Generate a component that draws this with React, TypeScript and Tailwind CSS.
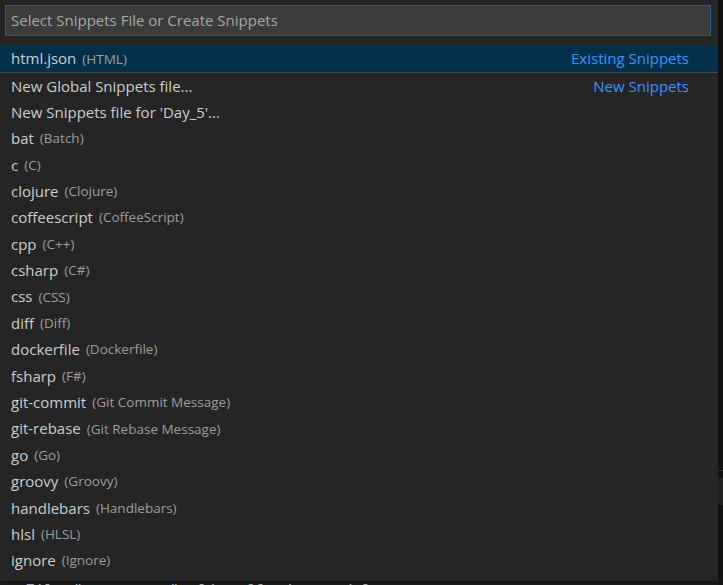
import React from "react";

const rows: [string, string][] = [
  ["bat", "Batch"],
  ["c", "C"],
  ["clojure", "Clojure"],
  ["coffeescript", "CoffeeScript"],
  ["cpp", "C++"],
  ["csharp", "C#"],
  ["css", "CSS"],
  ["diff", "Diff"],
  ["dockerfile", "Dockerfile"],
  ["fsharp", "F#"],
  ["git-commit", "Git Commit Message"],
  ["git-rebase", "Git Rebase Message"],
  ["go", "Go"],
  ["groovy", "Groovy"],
  ["handlebars", "Handlebars"],
  ["hlsl", "HLSL"],
  ["ignore", "Ignore"],
];

function Row({ label, desc, right, selected, border }: { label: string; desc?: string; right?: string; selected?: boolean; border?: boolean }) {
  return (
    <div
      className={
        "flex items-center pl-[11px] pr-[29px] " +
        (selected ? "bg-[#062f4a] h-[27.4px] " : "h-[26.4px] ") +
        (border ? "border-t border-[#3f4a57] " : "")
      }
    >
      <span className="text-[15px] text-[#cccccc] whitespace-pre">{label}</span>
      {desc && <span className="ml-[6px] text-[13.5px] text-[#9d9d9d] whitespace-pre">({desc})</span>}
      {right && <span className="ml-auto text-[15px] text-[#3794ff]">{right}</span>}
    </div>
  );
}

export default function App() {
  return (
    <div
      className="relative w-[723px] h-[585px] overflow-hidden bg-[#161616]"
      style={{ fontFamily: "'Open Sans', 'Noto Sans', sans-serif" }}
    >
      <div className="absolute left-0 top-[579px] w-[718px] h-[10px] bg-[#1e1e1e] overflow-hidden">
        <div
          className="absolute left-[25px] top-[2px] text-[16px] leading-[20px] text-[#bbbbbb] whitespace-pre"
          style={{ fontFamily: "'DejaVu Sans Mono', monospace" }}
        >
          File "manage.py", line 11, in &lt;module&gt;
        </div>
      </div>
      <div className="absolute right-0 top-[470px] w-[5px] h-[1px] bg-[#3a3a3a]" />
      <div className="absolute right-0 top-[478px] w-[5px] h-[27px] bg-[#2a2a2a]" />
      <div className="absolute left-0 top-0 w-[718px] h-[581px] bg-[#252526] shadow-[0_0_8px_rgba(0,0,0,0.6)] flex flex-col">
        <div className="px-[5px] pt-[5px] pr-[7px]">
          <div className="h-[31px] border border-[#0e639c] bg-[#3c3c3c] flex items-center pl-[5px]">
            <span className="text-[15px] text-[#a6a6a6]">Select Snippets File or Create Snippets</span>
          </div>
        </div>
        <div className="mt-[9px] flex flex-col">
          <Row label="html.json" desc="HTML" right="Existing Snippets" selected />
          <Row label="New Global Snippets file..." right="New Snippets" border />
          <Row label="New Snippets file for 'Day_5'..." />
          {rows.map(([l, d]) => (
            <Row key={l} label={l} desc={d} />
          ))}
        </div>
      </div>
    </div>
  );
}
